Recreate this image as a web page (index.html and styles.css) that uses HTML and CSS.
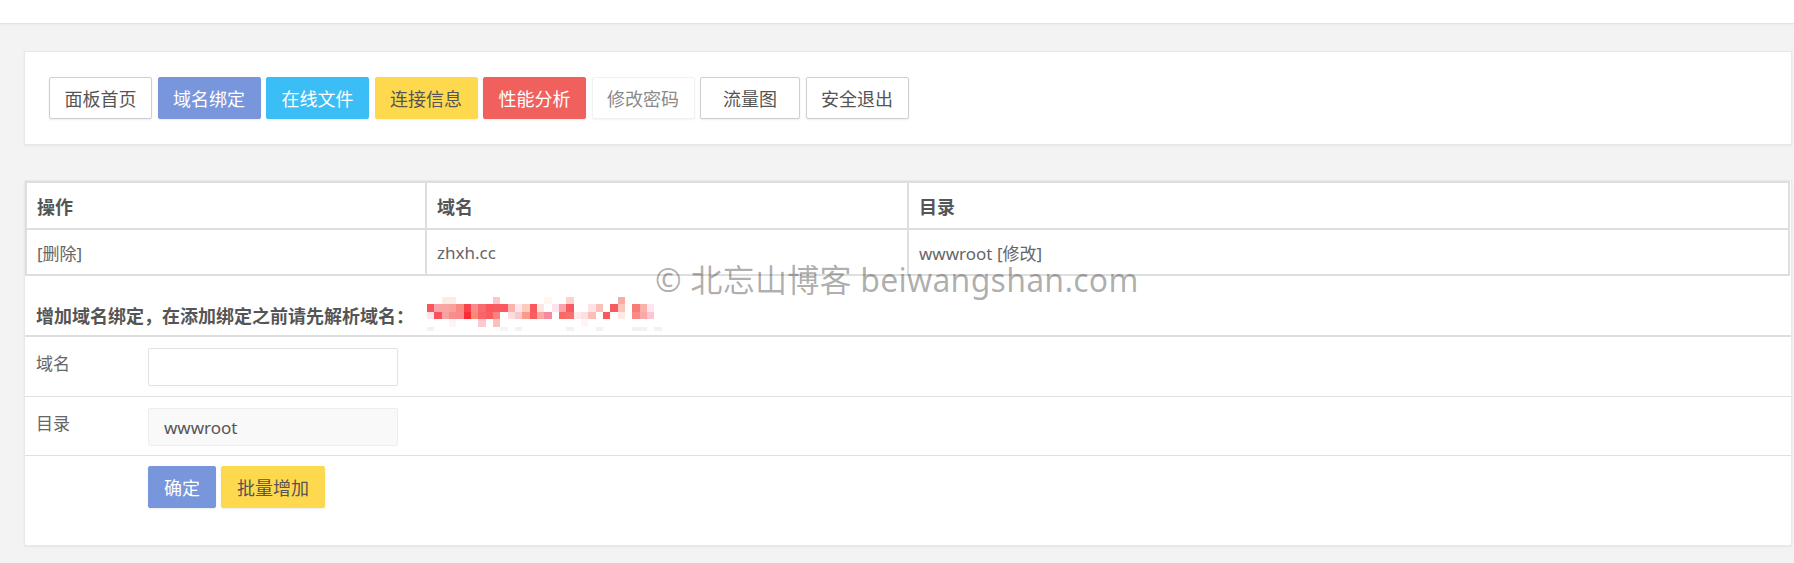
FILE: index.html
```html
<!DOCTYPE html>
<html lang="zh-CN">
<head>
<meta charset="utf-8">
<title>域名绑定</title>
<link rel="stylesheet" href="styles.css">
</head>
<body>
<header class="topbar"></header>
<main class="page">
  <section class="card nav-card">
    <nav class="btn-row">
      <a class="btn btn-default">面板首页</a>
      <a class="btn btn-blue">域名绑定</a>
      <a class="btn btn-sky">在线文件</a>
      <a class="btn btn-yellow">连接信息</a>
      <a class="btn btn-red">性能分析</a>
      <a class="btn btn-ghost">修改密码</a>
      <a class="btn btn-default btn-wide">流量图</a>
      <a class="btn btn-default">安全退出</a>
    </nav>
  </section>

  <section class="card domain-card">
    <table class="bind-table">
      <thead>
        <tr><th class="col-op">操作</th><th class="col-domain">域名</th><th>目录</th></tr>
      </thead>
      <tbody>
        <tr><td>[删除]</td><td>zhxh.cc</td><td>wwwroot [修改]</td></tr>
      </tbody>
    </table>

    <div class="add-title">
      <span>增加域名绑定，在添加绑定之前请先解析域名：</span>
      <svg class="mosaic" width="242" height="37" viewBox="0 0 33 5" preserveAspectRatio="none" aria-hidden="true">
        <g shape-rendering="crispEdges">
          <rect x="2" y="0" width="2" height="1" fill="#fdebe8"/>
          <rect x="9" y="0" width="1" height="1" fill="#fcc6ca"/>
          <rect x="16" y="0" width="1" height="1" fill="#fff6f2"/>
          <rect x="19" y="0" width="1" height="1" fill="#fdd2cb"/>
          <rect x="26" y="0" width="1" height="1" fill="#f8abab"/>

          <rect x="0" y="1" width="1" height="1" fill="#f9565c"/>
          <rect x="1" y="1" width="1" height="1" fill="#f9a3a8"/>
          <rect x="2" y="1" width="1" height="1" fill="#f9a6a3"/>
          <rect x="3" y="1" width="1" height="1" fill="#f9a29b"/>
          <rect x="4" y="1" width="1" height="1" fill="#f98a82"/>
          <rect x="5" y="1" width="1" height="1" fill="#f5444b"/>
          <rect x="6" y="1" width="1" height="1" fill="#f78b90"/>
          <rect x="7" y="1" width="1" height="1" fill="#f96a6d"/>
          <rect x="8" y="1" width="1" height="1" fill="#f7585d"/>
          <rect x="9" y="1" width="1" height="1" fill="#f75b5f"/>
          <rect x="10" y="1" width="1" height="1" fill="#f9595f"/>
          <rect x="11" y="1" width="1" height="1" fill="#fcb3b0"/>
          <rect x="12" y="1" width="1" height="1" fill="#fee5ea"/>
          <rect x="13" y="1" width="1" height="1" fill="#fdcbbc"/>
          <rect x="14" y="1" width="1" height="1" fill="#f9585c"/>
          <rect x="15" y="1" width="1" height="1" fill="#fde6e0"/>
          <rect x="17" y="1" width="1" height="1" fill="#fde3ee"/>
          <rect x="18" y="1" width="1" height="1" fill="#f9a4aa"/>
          <rect x="19" y="1" width="1" height="1" fill="#f75a60"/>
          <rect x="22" y="1" width="1" height="1" fill="#fde2e6"/>
          <rect x="23" y="1" width="1" height="1" fill="#fcc0b8"/>
          <rect x="25" y="1" width="1" height="1" fill="#f75a60"/>
          <rect x="26" y="1" width="1" height="1" fill="#fcc5be"/>
          <rect x="28" y="1" width="1" height="1" fill="#f87c76"/>
          <rect x="29" y="1" width="1" height="1" fill="#fbb0a8"/>
          <rect x="30" y="1" width="1" height="1" fill="#fde6ef"/>

          <rect x="0" y="2" width="1" height="1" fill="#fde5ec"/>
          <rect x="1" y="2" width="1" height="1" fill="#f7535a"/>
          <rect x="2" y="2" width="1" height="1" fill="#f9a0a3"/>
          <rect x="3" y="2" width="1" height="1" fill="#f98c8c"/>
          <rect x="4" y="2" width="1" height="1" fill="#f98a8c"/>
          <rect x="5" y="2" width="1" height="1" fill="#fb2c36"/>
          <rect x="6" y="2" width="1" height="1" fill="#f78a72"/>
          <rect x="7" y="2" width="1" height="1" fill="#f9636c"/>
          <rect x="8" y="2" width="1" height="1" fill="#f85d60"/>
          <rect x="9" y="2" width="1" height="1" fill="#fb8080"/>
          <rect x="11" y="2" width="1" height="1" fill="#fcdcdc"/>
          <rect x="12" y="2" width="1" height="1" fill="#fbc7cf"/>
          <rect x="13" y="2" width="1" height="1" fill="#f89a8c"/>
          <rect x="14" y="2" width="1" height="1" fill="#f95c61"/>
          <rect x="15" y="2" width="1" height="1" fill="#fba7a2"/>
          <rect x="16" y="2" width="1" height="1" fill="#f98a9a"/>
          <rect x="18" y="2" width="1" height="1" fill="#f96a64"/>
          <rect x="19" y="2" width="1" height="1" fill="#f9706a"/>
          <rect x="20" y="2" width="1" height="1" fill="#fdeaea"/>
          <rect x="21" y="2" width="1" height="1" fill="#fde0e0"/>
          <rect x="22" y="2" width="1" height="1" fill="#fcbfb8"/>
          <rect x="24" y="2" width="1" height="1" fill="#f9585c"/>
          <rect x="26" y="2" width="1" height="1" fill="#fde8e6"/>
          <rect x="28" y="2" width="1" height="1" fill="#f98a8a"/>
          <rect x="29" y="2" width="1" height="1" fill="#fba8a8"/>
          <rect x="30" y="2" width="1" height="1" fill="#fcc5d5"/>

          <rect x="3" y="3" width="1" height="1" fill="#fef4f4"/>
          <rect x="7" y="3" width="1" height="1" fill="#fcc9d0"/>
          <rect x="9" y="3" width="1" height="1" fill="#fcc0bc"/>
          <rect x="21" y="3" width="1" height="1" fill="#fef6f6"/>

          <rect x="0" y="4" width="1" height="0.6" fill="#f2f2f2"/>
          <rect x="10" y="4" width="1" height="0.6" fill="#f4f4f4"/>
          <rect x="12" y="4" width="1" height="0.6" fill="#f2f2f2"/>
          <rect x="19" y="4" width="1" height="0.6" fill="#f2f2f2"/>
          <rect x="23" y="4" width="1" height="0.6" fill="#f2f2f2"/>
          <rect x="28" y="4" width="2" height="0.6" fill="#f2f2f2"/>
          <rect x="31" y="4" width="1" height="0.6" fill="#f2f2f2"/>
        </g>
      </svg>
    </div>

    <div class="form-row">
      <label class="form-label">域名</label>
      <input class="input" type="text">
    </div>
    <div class="form-row">
      <label class="form-label">目录</label>
      <input class="input input-disabled" type="text" value="wwwroot" disabled>
    </div>
    <div class="form-actions">
      <button class="btn btn-blue btn-form">确定</button>
      <button class="btn btn-yellow btn-form">批量增加</button>
    </div>
  </section>
</main>
<div class="watermark">© 北忘山博客 beiwangshan.com</div>
</body>
</html>
```

FILE: styles.css
```css
* {
  box-sizing: border-box;
}

html, body {
  margin: 0;
  padding: 0;
}

body {
  background: #f3f3f3;
  font-family: "Noto Sans", "Noto Sans CJK SC", sans-serif;
  color: #666;
  font-size: 17px;
  min-height: 563px;
}

.topbar {
  height: 24px;
  background: #fff;
  border-bottom: 1px solid #e4e4e4;
  box-shadow: 0 1px 2px rgba(0, 0, 0, 0.04);
}

.page {
  padding: 27px 2px 0 24px;
}

.card {
  background: #fff;
  border: 1px solid #e8e8e8;
  box-shadow: 0 1px 2px rgba(0, 0, 0, 0.06);
}

.nav-card {
  height: 94px;
  padding: 25px 24px 0 24px;
}

.btn-row {
  display: flex;
  gap: 5.5px;
}

.btn {
  display: inline-block;
  height: 42px;
  line-height: 40px;
  padding: 0 14.5px;
  border: 1px solid transparent;
  border-radius: 2px;
  font-family: "Noto Sans CJK SC", sans-serif;
  font-size: 18px;
  text-align: center;
  white-space: nowrap;
  cursor: pointer;
  box-shadow: 0 1px 2px rgba(0, 0, 0, 0.08);
}

.btn-default {
  background: #fff;
  border-color: #cfcfcf;
  color: #555;
}

.btn-wide {
  min-width: 100px;
}

.btn-blue {
  background: #7896dc;
  border-color: #7896dc;
  color: #fff;
}

.btn-sky {
  background: #3bbdf6;
  border-color: #3bbdf6;
  color: #fff;
}

.btn-yellow {
  background: #ffd94d;
  border-color: #ffd94d;
  color: #555;
}

.btn-red {
  background: #f0615e;
  border-color: #f0615e;
  color: #fff;
}

.btn-ghost {
  background: #fff;
  border-color: #f1f1f1;
  color: #8a8a8a;
  box-shadow: 0 1px 2px rgba(0, 0, 0, 0.05);
}

.domain-card {
  margin-top: 35px;
  height: 366px;
}

.bind-table {
  width: calc(100% - 1px);
  border-spacing: 0;
  border-top: 2px solid #dedede;
  border-left: 2px solid #dedede;
  table-layout: fixed;
}

.bind-table th,
.bind-table td {
  border-right: 2px solid #dedede;
  border-bottom: 2px solid #dedede;
  text-align: left;
  padding: 0 10px;
  white-space: nowrap;
}

.bind-table th {
  height: 47px;
  font-family: "Noto Sans CJK SC", sans-serif;
  font-size: 18px;
  font-weight: 700;
  color: #555;
}

.bind-table td {
  height: 46px;
  font-size: 17px;
  color: #666;
}

.col-op {
  width: 400px;
}

.col-domain {
  width: 482px;
}

.add-title {
  display: flex;
  align-items: flex-start;
  height: 61px;
  padding: 27px 11px 0;
  border-bottom: 2px solid #dedede;
  font-family: "Noto Sans CJK SC", sans-serif;
  font-size: 18px;
  line-height: 24px;
  font-weight: 700;
  color: #555;
}

.mosaic {
  display: block;
  margin: -6px 0 0 13px;
}

.form-row {
  display: flex;
  align-items: flex-start;
  height: 60px;
  padding: 11px 11px 0;
  border-bottom: 1px solid #e0e0e0;
}

.form-row + .form-row {
  height: 59px;
}

.form-label {
  width: 112px;
  padding-top: 1px;
  line-height: 28px;
  font-family: "Noto Sans CJK SC", sans-serif;
  font-size: 17px;
  color: #666;
}

.input {
  width: 250px;
  height: 38px;
  padding: 0 15px;
  border: 1px solid #e2e2e2;
  border-radius: 2px;
  background: #fff;
  font-family: "Noto Sans", sans-serif;
  font-size: 17px;
  color: #555;
  outline: none;
}

.input-disabled {
  background: #f9f9f9;
  border-color: #eeeeee;
  color: #555;
}

.form-actions {
  display: flex;
  gap: 5px;
  padding: 10px 0 0 123px;
}

.btn-form {
  padding: 0 15px;
}

.watermark {
  position: absolute;
  left: 655px;
  top: 264px;
  font-family: "Noto Sans", "Noto Sans CJK SC", sans-serif;
  font-size: 32px;
  line-height: 32px;
  letter-spacing: 0.25px;
  color: rgba(0, 0, 0, 0.33);
  white-space: nowrap;
  pointer-events: none;
}
```
